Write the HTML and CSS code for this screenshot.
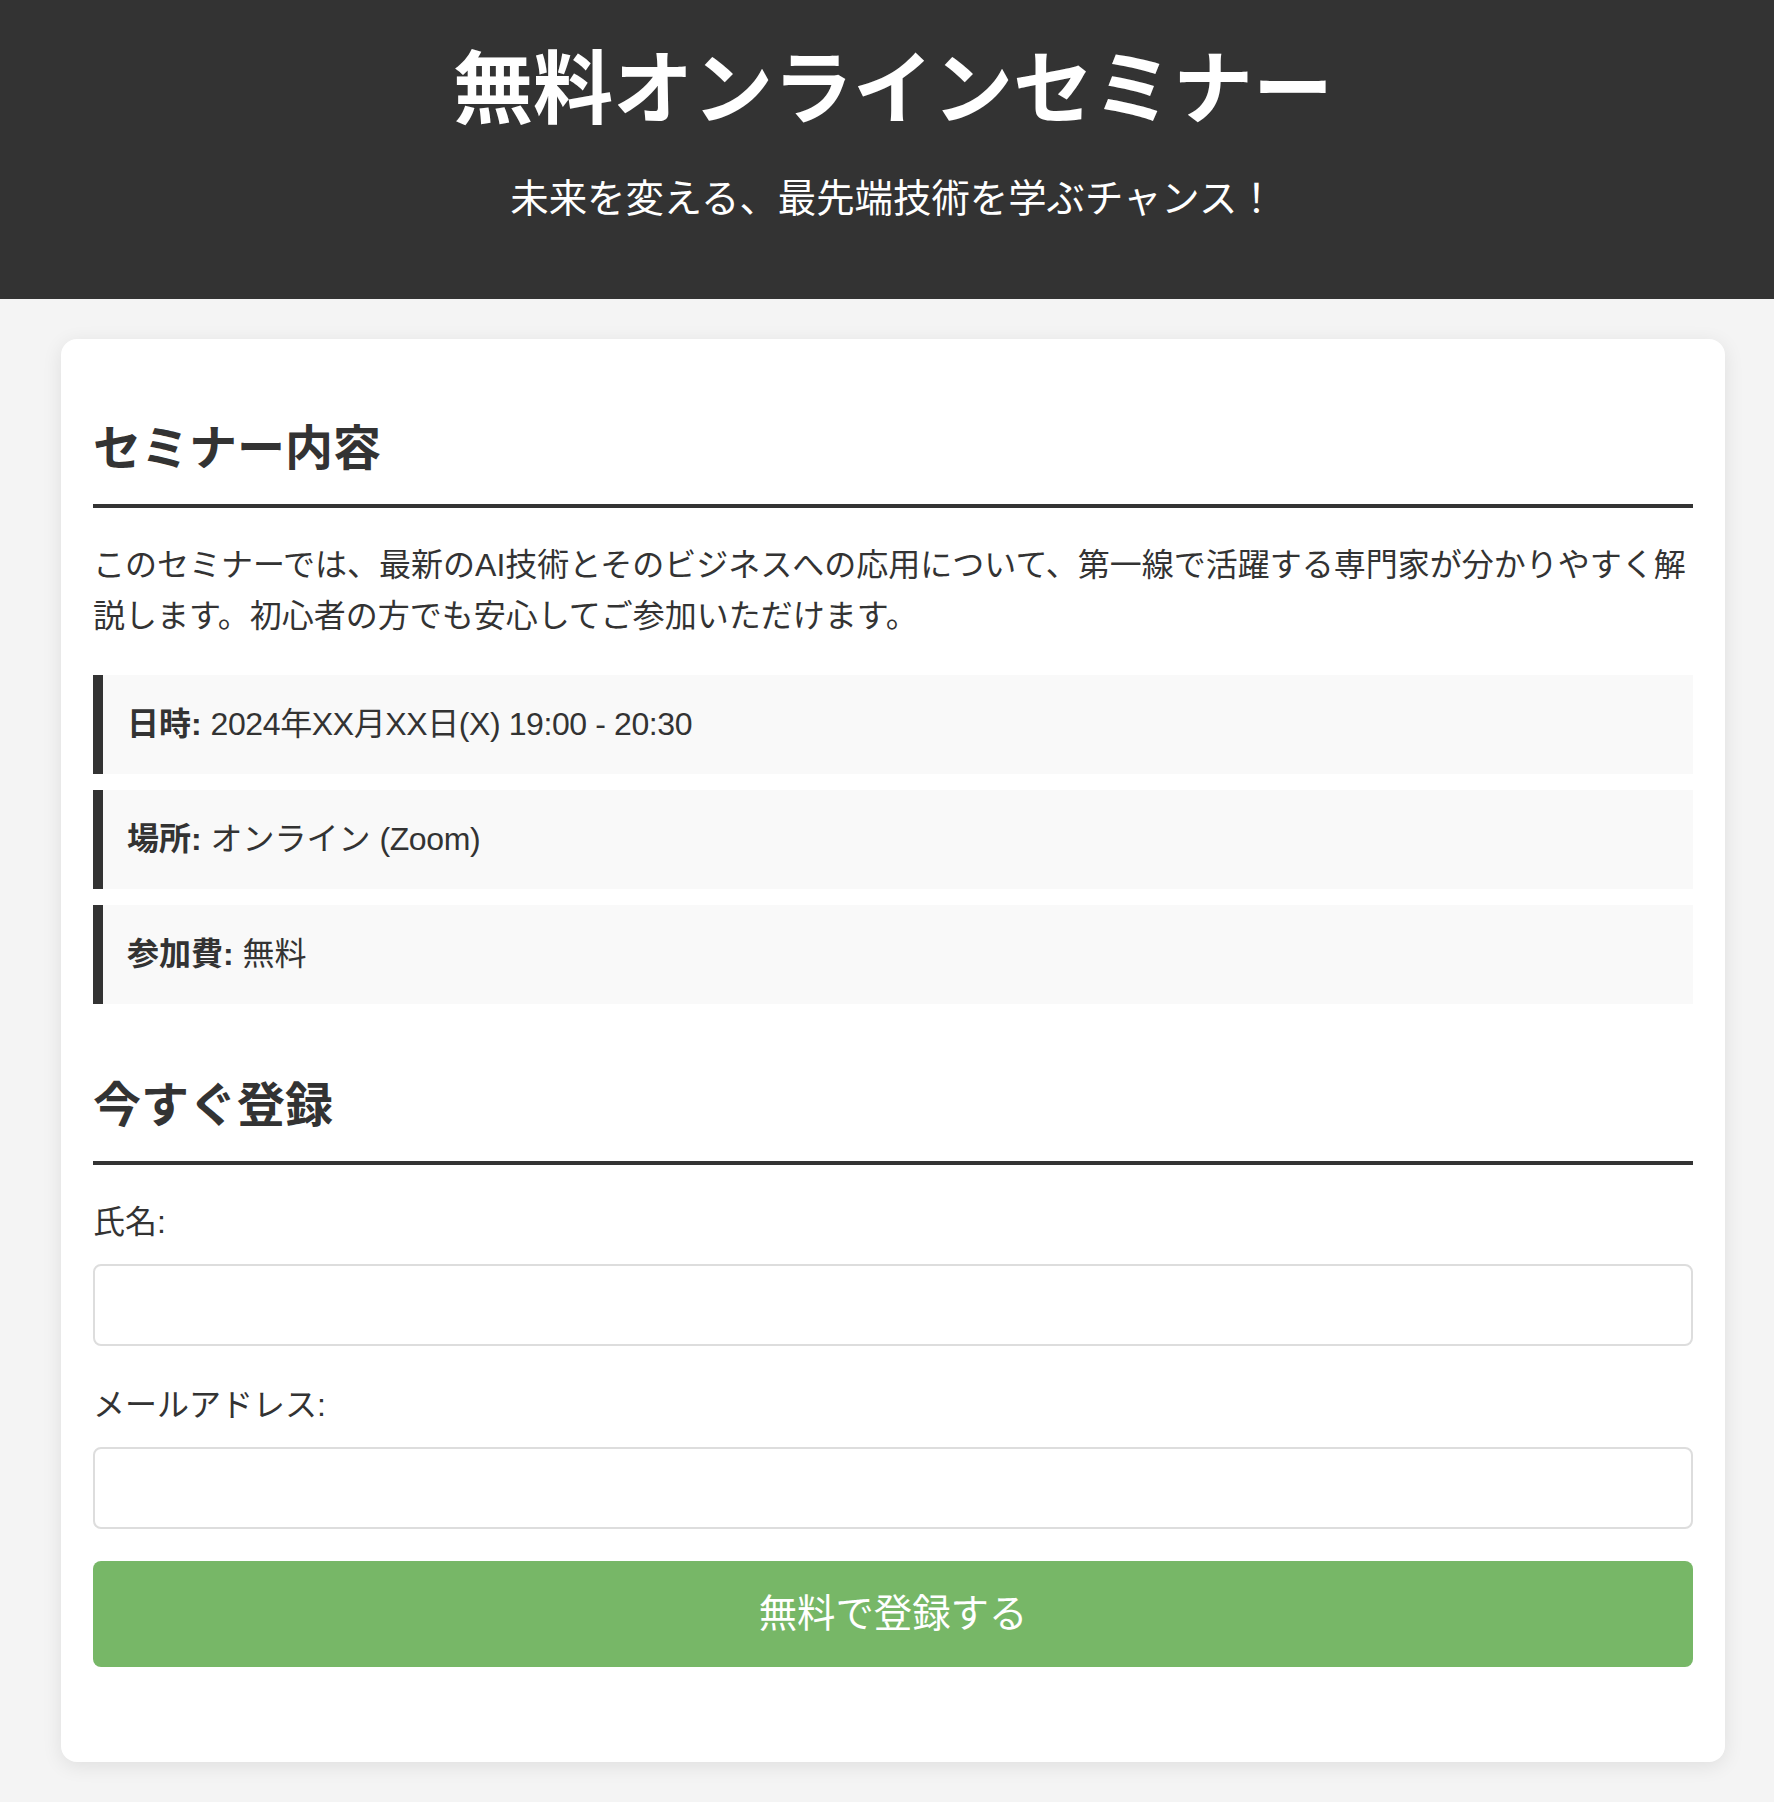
FILE: index.html
```html
<!DOCTYPE html>
<html lang="ja">
<head>
<meta charset="utf-8">
<title>無料オンラインセミナー</title>
<link rel="stylesheet" href="styles.css">
</head>
<body>
<header class="hero">
  <h1 class="hero-title">無料オンラインセミナー</h1>
  <p class="hero-sub">未来を変える、最先端技術を学ぶチャンス！</p>
</header>
<main class="card">
  <section class="section">
    <h2 class="section-title">セミナー内容</h2>
    <p class="lead">このセミナーでは、最新のAI技術とそのビジネスへの応用について、第一線で活躍する専門家が分かりやすく解説します。初心者の方でも安心してご参加いただけます。</p>
    <div class="info"><strong>日時:</strong> <span class="latin">2024年XX月XX日(X) 19:00 - 20:30</span></div>
    <div class="info"><strong>場所:</strong> オンライン <span class="latin">(Zoom)</span></div>
    <div class="info"><strong>参加費:</strong> 無料</div>
  </section>
  <section class="section section-last">
    <h2 class="section-title">今すぐ登録</h2>
    <form class="form">
      <label class="label" for="name">氏名:</label>
      <input class="input input-first" type="text" id="name">
      <label class="label" for="email">メールアドレス:</label>
      <input class="input" type="email" id="email">
      <button class="submit" type="button">無料で登録する</button>
    </form>
  </section>
</main>
</body>
</html>
```
FILE: styles.css
```css
html, body {
  margin: 0;
  padding: 0;
}
body {
  background: #f4f4f4;
  color: #333;
  font-family: "Liberation Sans", "Noto Sans CJK JP", sans-serif;
  font-size: 32px;
  line-height: 51.2px;
}
.hero {
  background: #333;
  color: #fff;
  text-align: center;
  padding: 42px 0 70px 12px;
}
.hero-title {
  margin: 0;
  font-size: 80px;
  line-height: 96px;
  font-weight: 700;
}
.hero-sub {
  margin: 30px 0 0;
  font-size: 38.4px;
  line-height: 61.44px;
}
.card {
  display: block;
  background: #fff;
  margin: 40px 49px 40px 61px;
  padding: 32px;
  border-radius: 16px;
  box-shadow: 0 4px 20px rgba(0, 0, 0, 0.09);
}
.section {
  margin-bottom: 64px;
}
.section-last {
  margin-bottom: 63px;
}
.section-title {
  margin: 40px 0 32px;
  font-size: 48px;
  line-height: 76.8px;
  font-weight: 700;
  padding-bottom: 16px;
  border-bottom: 4px solid #333;
}
.lead {
  margin: 0 0 32px;
}
.info {
  background: #f9f9f9;
  border-left: 10px solid #333;
  padding: 24px;
  margin-bottom: 16px;
}
.info strong {
  font-weight: 700;
}
.latin {
  letter-spacing: -0.4px;
}
.form {
  margin: 0;
}
.label {
  display: block;
  margin-bottom: 16px;
}
.input {
  display: block;
  box-sizing: border-box;
  width: 100%;
  height: 82px;
  margin: 0 0 32px;
  padding: 0 20px;
  border: 2px solid #ddd;
  border-radius: 8px;
  background: #fff;
  font: inherit;
}
.input-first {
  margin-bottom: 34px;
}
.submit {
  display: block;
  width: 100%;
  height: 106px;
  border: 0;
  border-radius: 8px;
  background: #77b767;
  color: #fff;
  font-family: inherit;
  font-size: 38.4px;
  line-height: 62px;
  padding: 22px;
  cursor: pointer;
}
```
